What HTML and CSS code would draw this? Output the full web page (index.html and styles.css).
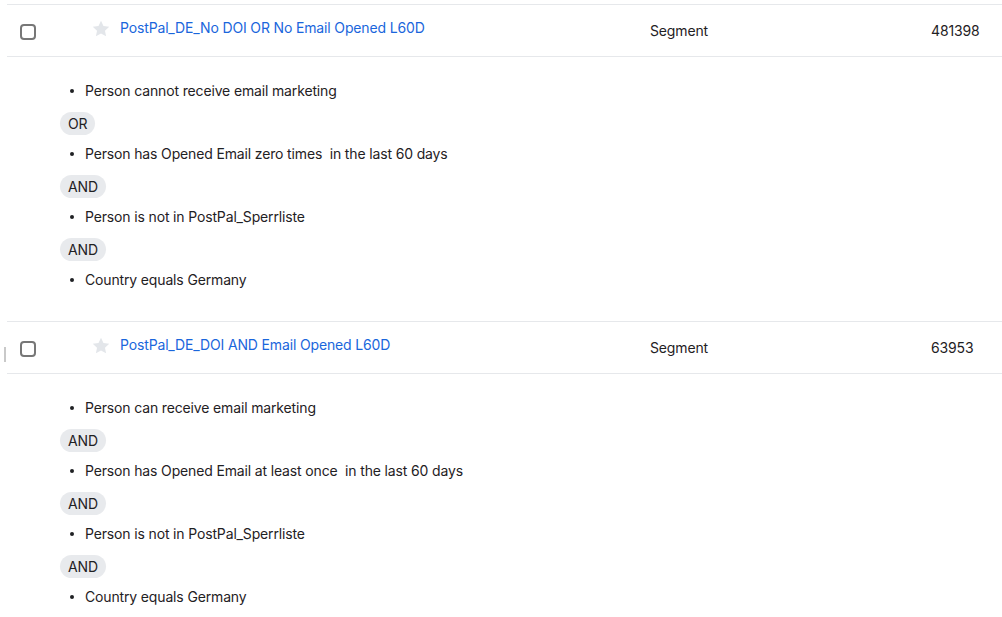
FILE: index.html
```html
<!DOCTYPE html>
<html>
<head>
<meta charset="utf-8">
<link rel="stylesheet" href="styles.css">
</head>
<body>
<div class="list">
  <div class="item">
    <div class="row">
      <div class="cell-check"><span class="checkbox"></span></div>
      <div class="cell-star">
        <svg class="star" viewBox="0 0 24 24" width="18" height="18"><path d="M12 1l3.3 7 7.7.9-5.7 5.3 1.5 7.6L12 18l-6.8 3.8 1.5-7.6L1 8.9l7.7-.9z"/></svg>
      </div>
      <div class="cell-name"><a class="name" href="#">PostPal_DE_No DOI OR No Email Opened L60D</a></div>
      <div class="cell-type">Segment</div>
      <div class="cell-count">481398</div>
    </div>
    <div class="details">
      <div class="cond"><span class="dot"></span>Person cannot receive email marketing</div>
      <div class="op">OR</div>
      <div class="cond"><span class="dot"></span>Person has Opened Email zero times&nbsp; in the last 60 days</div>
      <div class="op">AND</div>
      <div class="cond"><span class="dot"></span>Person is not in PostPal_Sperrliste</div>
      <div class="op">AND</div>
      <div class="cond"><span class="dot"></span>Country equals Germany</div>
    </div>
  </div>
  <div class="item">
    <div class="row">
      <span class="handle"></span>
      <div class="cell-check"><span class="checkbox"></span></div>
      <div class="cell-star">
        <svg class="star" viewBox="0 0 24 24" width="18" height="18"><path d="M12 1l3.3 7 7.7.9-5.7 5.3 1.5 7.6L12 18l-6.8 3.8 1.5-7.6L1 8.9l7.7-.9z"/></svg>
      </div>
      <div class="cell-name"><a class="name" href="#">PostPal_DE_DOI AND Email Opened L60D</a></div>
      <div class="cell-type">Segment</div>
      <div class="cell-count">63953</div>
    </div>
    <div class="details">
      <div class="cond"><span class="dot"></span>Person can receive email marketing</div>
      <div class="op">AND</div>
      <div class="cond"><span class="dot"></span>Person has Opened Email at least once&nbsp; in the last 60 days</div>
      <div class="op">AND</div>
      <div class="cond"><span class="dot"></span>Person is not in PostPal_Sperrliste</div>
      <div class="op">AND</div>
      <div class="cond"><span class="dot"></span>Country equals Germany</div>
    </div>
  </div>
</div>
</body>
</html>
```
FILE: styles.css
```css
html, body {
  margin: 0;
  padding: 0;
  background: #ffffff;
}
body {
  font-family: Inter, "Noto Sans", "Liberation Sans", sans-serif;
  font-size: 14px;
  line-height: 20px;
  letter-spacing: -0.15px;
  color: #1f2124;
  overflow: hidden;
}
.list {
  margin-left: 7px;
  padding-top: 4px;
}
.row {
  position: relative;
  display: flex;
  align-items: flex-start;
  height: 51px;
  border-top: 1px solid #e6e8eb;
  border-bottom: 1px solid #e6e8eb;
}
.item + .item .row {
  border-top: none;
}
.item + .item {
  border-top: 1px solid #e6e8eb;
}
.handle {
  position: absolute;
  left: -3px;
  top: 25px;
  width: 2px;
  height: 15px;
  background: #c9c9c9;
}
.cell-check {
  width: 73px;
  padding-left: 13px;
  padding-top: 19px;
}
.checkbox {
  display: block;
  width: 12px;
  height: 12px;
  border: 2px solid #777777;
  border-radius: 4px;
}
.cell-star {
  width: 27px;
  padding-top: 15px;
}
.star {
  display: block;
  margin-left: -1px;
  fill: #e3e6ea;
}
.cell-name {
  width: 530px;
  padding-top: 13px;
}
.name {
  color: #1a66dc;
  text-decoration: none;
}
.cell-type {
  width: 281px;
  padding-top: 16px;
}
.cell-count {
  padding-top: 16px;
}
.details {
  padding: 24px 0 31px 53px;
}
.cond {
  display: flex;
  align-items: center;
  height: 20px;
  padding-left: 10px;
}
.dot {
  width: 4px;
  height: 4px;
  border-radius: 50%;
  background: #1f2124;
  margin-right: 11px;
}
.op {
  display: flex;
  width: max-content;
  align-items: center;
  height: 23px;
  padding: 0 8px;
  border-radius: 12px;
  background: #e8eaed;
  margin: 11px 0 9px;
}
```
